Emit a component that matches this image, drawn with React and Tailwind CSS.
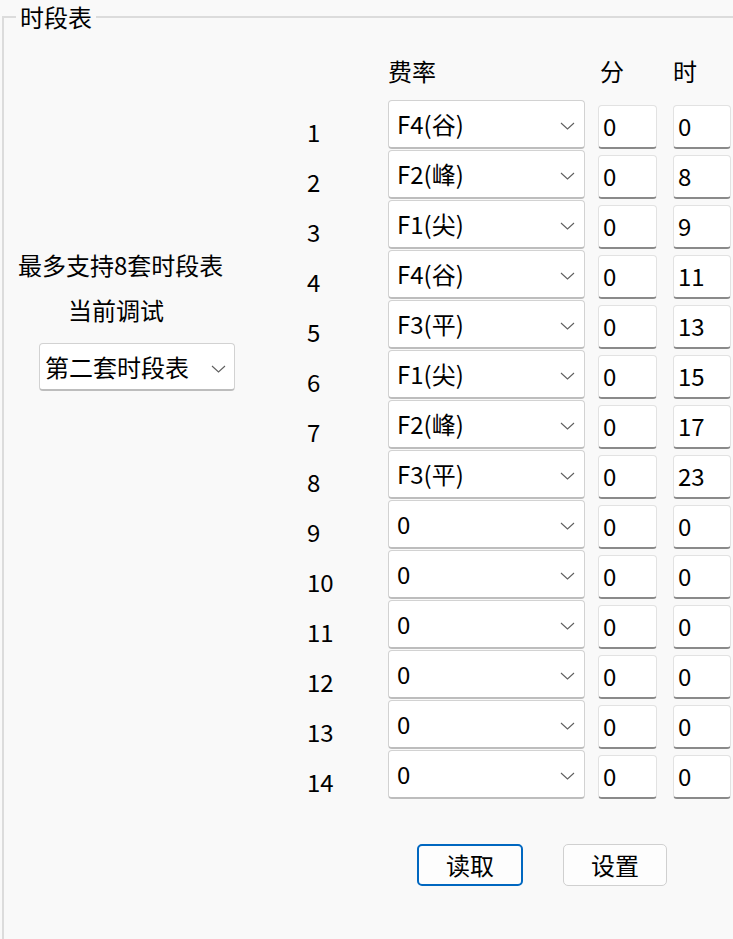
const rows = [
  ["F4(谷)", "0", "0"],
  ["F2(峰)", "0", "8"],
  ["F1(尖)", "0", "9"],
  ["F4(谷)", "0", "11"],
  ["F3(平)", "0", "13"],
  ["F1(尖)", "0", "15"],
  ["F2(峰)", "0", "17"],
  ["F3(平)", "0", "23"],
  ["0", "0", "0"],
  ["0", "0", "0"],
  ["0", "0", "0"],
  ["0", "0", "0"],
  ["0", "0", "0"],
  ["0", "0", "0"],
];

function Chevron() {
  return (
    <svg width="15" height="8" viewBox="0 0 15 8" className="shrink-0 mt-[4px]">
      <polyline points="1,1 7.5,7 14,1" fill="none" stroke="#5f5f5f" strokeWidth="1.1" />
    </svg>
  );
}

function Combo({ value, className }) {
  return (
    <div
      className={
        "flex items-center justify-between bg-white border border-[#d2d2d2] border-b-[#bdbdbd] border-b-2 rounded-[4px] " +
        className
      }
    >
      <span className="leading-[28px]">{value}</span>
      <Chevron />
    </div>
  );
}

function Edit({ value }) {
  return (
    <div className="mt-[5px] h-[44px] flex items-center bg-white border border-[#e2e2e2] border-b-2 border-b-[#8a8a8a] rounded-[4px] pl-[4px] pb-[2px]">
      <span className="leading-[28px]">{value}</span>
    </div>
  );
}

export default function App() {
  return (
    <div
      className="w-[733px] h-[939px] bg-[#f9f9f9] overflow-hidden pt-[5px] pl-[2px] text-[24px] text-black"
      style={{ fontFamily: '"Noto Sans CJK SC", "Noto Sans", sans-serif' }}
    >
      <fieldset className="m-0 p-0 w-[800px] h-[1000px] min-w-0 border-0 border-t-2 border-l-2 border-solid border-[#dcdcdc]">
        <legend className="ml-[12px] px-[4px] leading-[24px]">时段表</legend>
        <div className="flex">
          {/* left column */}
          <div className="w-[296px] shrink-0 flex flex-col items-start">
            <div className="mt-[220px] ml-[14px] leading-[32px] whitespace-nowrap">最多支持8套时段表</div>
            <div className="mt-[13px] ml-[64px] leading-[32px] whitespace-nowrap">当前调试</div>
            <Combo value="第二套时段表" className="mt-[17px] ml-[35px] w-[196px] h-[48px] pl-[5px] pr-[8px]" />
          </div>

          {/* right column */}
          <div className="flex flex-col">
            <div className="mt-[26px] h-[32px] leading-[32px] flex">
              <div className="w-[88px]" />
              <div className="w-[197px]">费率</div>
              <div className="ml-[13px] w-[59px] pl-[2px]">分</div>
              <div className="ml-[16px] w-[58px]">时</div>
            </div>
            <div className="mt-[13px] flex flex-col">
              {rows.map((r, i) => (
                <div key={i} className="h-[50px] flex">
                  <div className="w-[88px] pl-[7px] pt-[20px] leading-[24px]">{i + 1}</div>
                  <Combo value={r[0]} className="w-[197px] h-[49px] pl-[8px] pr-[9px]" />
                  <div className="ml-[13px] w-[59px]">
                    <Edit value={r[1]} />
                  </div>
                  <div className="ml-[16px] w-[58px]">
                    <Edit value={r[2]} />
                  </div>
                </div>
              ))}
            </div>
            <div className="mt-[44px] flex">
              <button className="ml-[117px] w-[106px] h-[42px] bg-[#fdfdfd] border-2 border-[#0067c0] rounded-[5px] leading-[28px]">
                读取
              </button>
              <button className="ml-[40px] w-[104px] h-[42px] bg-[#fdfdfd] border border-[#d0d0d0] rounded-[5px] leading-[28px]">
                设置
              </button>
            </div>
          </div>
        </div>
      </fieldset>
    </div>
  );
}
